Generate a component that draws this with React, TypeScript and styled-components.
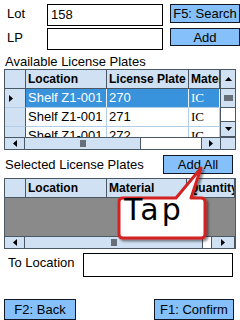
import * as React from 'react';
import styled, { createGlobalStyle } from 'styled-components';

const GlobalStyle = createGlobalStyle`
    html, body {
        margin: 0;
        padding: 0;
        background: #ffffff;
    }
    body {
        font-family: "Liberation Sans", Arial, sans-serif;
        font-size: 13px;
        color: #000000;
    }
`;

const HEADER_BG = '#cfe1f3';
const DARK_LINE = '#4a5866';
const LIGHT_LINE = '#b4cde6';
const SELECTED = '#3992dc';

const Screen = styled.div`
    position: relative;
    width: 240px;
    height: 320px;
    overflow: hidden;
    display: flex;
    flex-direction: column;
`;

const TopForm = styled.div`
    display: grid;
    grid-template-columns: 36px 116px 70px;
    grid-auto-rows: 22px;
    column-gap: 7px;
    row-gap: 2px;
    padding: 4px 0 0 4px;
`;

const FieldLabel = styled.div`
    padding: 1px 0 0 3px;
    line-height: 17px;
`;

const TextBox = styled.div<{ $width?: number; $height?: number }>`
    box-sizing: border-box;
    width: ${p => (p.$width ? `${p.$width}px` : 'auto')};
    height: ${p => p.$height || 22}px;
    border: 1px solid #000000;
    background: #ffffff;
    padding: 2px 3px;
    line-height: 16px;
`;

const Button = styled.div<{ $width: number; $height?: number }>`
    box-sizing: border-box;
    width: ${p => p.$width}px;
    height: ${p => p.$height || 19}px;
    align-self: start;
    border: 1px solid #101828;
    background: #86c0fa;
    display: flex;
    align-items: center;
    justify-content: center;
    line-height: 15px;
`;

const SectionTitle = styled.div`
    margin-top: 4px;
    padding-left: 5px;
    height: 15px;
    line-height: 15px;
`;

const SectionBar = styled.div`
    margin-top: 5px;
    height: 19px;
    display: flex;
    justify-content: space-between;
    align-items: center;
    padding: 0 7px 0 5px;
`;

const GridFrame = styled.div<{ $top: number }>`
    box-sizing: border-box;
    margin: ${p => p.$top}px 0 0 4px;
    width: 232px;
    border: 1px solid ${DARK_LINE};
    display: flex;
    flex-direction: column;
    background: #ffffff;
`;

const GridBody = styled.div<{ $height: number }>`
    display: flex;
    height: ${p => p.$height}px;
    overflow: hidden;
`;

const Table = styled.div<{ $columns: string }>`
    flex: 1;
    display: grid;
    grid-template-columns: ${p => p.$columns};
    grid-auto-rows: 19px;
    align-content: start;
    overflow: hidden;
`;

const HeadCell = styled.div`
    box-sizing: border-box;
    background: ${HEADER_BG};
    border-right: 1px solid ${DARK_LINE};
    border-bottom: 1px solid ${DARK_LINE};
    font-weight: bold;
    font-size: 12px;
    line-height: 18px;
    padding-left: 2px;
    white-space: nowrap;
    overflow: hidden;
`;

const RowHead = styled.div`
    box-sizing: border-box;
    background: ${HEADER_BG};
    border-right: 1px solid ${DARK_LINE};
    border-bottom: 1px solid ${LIGHT_LINE};
    display: flex;
    align-items: center;
    padding-left: 4px;
`;

const Cell = styled.div<{ $selected?: boolean; $serif?: boolean }>`
    box-sizing: border-box;
    background: ${p => (p.$selected ? SELECTED : '#ffffff')};
    color: ${p => (p.$selected ? '#ffffff' : '#000000')};
    border-right: 1px solid ${p => (p.$selected ? '#e8f2fc' : LIGHT_LINE)};
    border-bottom: 1px solid ${LIGHT_LINE};
    font-family: ${p => (p.$serif ? '"Liberation Serif", "Times New Roman", serif' : 'inherit')};
    line-height: 18px;
    padding-left: 2px;
    white-space: nowrap;
    overflow: hidden;
`;

const EmptyArea = styled.div`
    grid-column: 1 / -1;
    height: 38px;
    background: #8a8a8a;
`;

const VScroll = styled.div`
    width: 14px;
    display: flex;
    flex-direction: column;
    border-left: 1px solid ${DARK_LINE};
`;

const ScrollButton = styled.div<{ $size: number; $vertical?: boolean }>`
    box-sizing: border-box;
    flex: 0 0 ${p => p.$size}px;
    background: ${HEADER_BG};
    display: flex;
    align-items: center;
    justify-content: center;
    ${p => (p.$vertical ? `border-bottom: 1px solid ${DARK_LINE};` : `border-right: 1px solid ${DARK_LINE};`)}
`;

const ScrollTrack = styled.div`
    flex: 1;
    background: #ffffff;
`;

const VTrack = styled(ScrollTrack)`
    border-bottom: 1px solid ${DARK_LINE};
`;

const HScroll = styled.div`
    display: flex;
    height: 11px;
    border-top: 1px solid ${DARK_LINE};
`;

const HTrack = styled(ScrollTrack)`
    border-right: 1px solid ${DARK_LINE};
`;

const Corner = styled.div`
    flex: 0 0 14px;
    background: ${HEADER_BG};
`;

const BottomRow = styled.div`
    margin-top: 4px;
    display: flex;
    align-items: flex-start;
    padding: 0 7px 0 8px;
    justify-content: space-between;
`;

const RowLabel = styled.div`
    line-height: 17px;
    padding-top: 1px;
`;

const Footer = styled.div`
    margin-top: auto;
    display: flex;
    justify-content: space-between;
    padding: 0 6px 0 4px;
`;

const Callout = styled.div`
    position: absolute;
    left: 112px;
    top: 162px;
    width: 100px;
    height: 82px;
`;

const CalloutText = styled.div`
    position: absolute;
    left: 12px;
    top: 31px;
    font-family: "DejaVu Sans", "Liberation Sans", sans-serif;
    font-size: 30px;
    letter-spacing: 3px;
    line-height: 34px;
    color: #000000;
`;

const Arrow = ({ dir }: { dir: 'up' | 'down' | 'left' | 'right' }) => {
    const pts = {
        up: '0,4 3.5,0 7,4',
        down: '0,0 7,0 3.5,4',
        left: '4,0 4,7 0,3.5',
        right: '0,0 0,7 4,3.5',
    }[dir];
    const vertical = dir === 'up' || dir === 'down';
    return (
        <svg width={vertical ? 7 : 4} height={vertical ? 4 : 7}>
            <polygon points={pts} fill="#000" />
        </svg>
    );
};

const Grip = ({ vertical }: { vertical?: boolean }) => (
    <svg width={vertical ? 9 : 6} height={vertical ? 6 : 7}>
        {[0, 1, 2].map(i =>
            vertical ? (
                <rect key={i} x={0} y={i * 2 + 0.5} width={9} height={1} fill="#000" />
            ) : (
                <rect key={i} x={i * 2 + 0.5} y={0} width={1} height={7} fill="#000" />
            ),
        )}
    </svg>
);

const HScrollBar = ({ thumb, right, corner }: { thumb: number; right: number; corner?: boolean }) => (
    <HScroll>
        <ScrollButton $size={20}><Arrow dir="left" /></ScrollButton>
        <ScrollButton $size={thumb}><Grip /></ScrollButton>
        <HTrack />
        <ScrollButton $size={right}><Arrow dir="right" /></ScrollButton>
        {corner && <Corner />}
    </HScroll>
);

const plates = [
    { location: 'Shelf Z1-001', plate: '270', material: 'IC' },
    { location: 'Shelf Z1-001', plate: '271', material: 'IC' },
    { location: 'Shelf Z1-001', plate: '272', material: 'IC' },
];

export default function App() {
    return (
        <Screen>
            <GlobalStyle />
            <TopForm>
                <FieldLabel>Lot</FieldLabel>
                <TextBox>158</TextBox>
                <Button $width={70}>F5: Search</Button>
                <FieldLabel>LP</FieldLabel>
                <TextBox />
                <Button $width={70} $height={18}>Add</Button>
            </TopForm>

            <SectionTitle>Available License Plates</SectionTitle>
            <GridFrame $top={0}>
                <GridBody $height={67}>
                    <Table $columns="21px 81px 82px 1fr">
                        <HeadCell />
                        <HeadCell>Location</HeadCell>
                        <HeadCell>License Plate</HeadCell>
                        <HeadCell>Material</HeadCell>
                        {plates.map((row, i) => (
                            <React.Fragment key={row.plate}>
                                <RowHead>{i === 0 && <Arrow dir="right" />}</RowHead>
                                <Cell $selected={i === 0}>{row.location}</Cell>
                                <Cell $selected={i === 0}>{row.plate}</Cell>
                                <Cell $selected={i === 0} $serif>{row.material}</Cell>
                            </React.Fragment>
                        ))}
                    </Table>
                    <VScroll>
                        <ScrollButton $size={19} $vertical><Arrow dir="up" /></ScrollButton>
                        <ScrollButton $size={19} $vertical><Grip vertical /></ScrollButton>
                        <VTrack />
                        <ScrollButton $size={15} $vertical><Arrow dir="down" /></ScrollButton>
                    </VScroll>
                </GridBody>
                <HScrollBar thumb={116} right={19} corner />
            </GridFrame>

            <SectionBar>
                <span>Selected License Plates</span>
                <Button $width={70}>Add All</Button>
            </SectionBar>
            <GridFrame $top={4}>
                <GridBody $height={57}>
                    <Table $columns="21px 81px 80px 1fr">
                        <HeadCell />
                        <HeadCell>Location</HeadCell>
                        <HeadCell>Material</HeadCell>
                        <HeadCell>Quantity</HeadCell>
                        <EmptyArea />
                    </Table>
                </GridBody>
                <HScrollBar thumb={178} right={23} />
            </GridFrame>

            <BottomRow>
                <RowLabel>To Location</RowLabel>
                <TextBox $width={150} $height={24} />
            </BottomRow>

            <Footer>
                <Button $width={72} $height={21}>F2: Back</Button>
                <Button $width={80} $height={21}>F1: Confirm</Button>
            </Footer>

            <Callout>
                <svg width="100" height="82" viewBox="112 162 100 82">
                    <defs>
                        <filter id="shadow" x="-10%" y="-10%" width="130%" height="130%">
                            <feDropShadow dx="2" dy="2" stdDeviation="1" floodColor="#000" floodOpacity="0.45" />
                        </filter>
                    </defs>
                    <path
                        d="M123 198 H176 L201 168 L191 198 H201 Q205 198 205 202 V234 Q205 238 201 238 H123 Q119 238 119 234 V202 Q119 198 123 198 Z"
                        fill="#ffffff"
                        stroke="#d42222"
                        strokeWidth={3}
                        strokeLinejoin="round"
                        filter="url(#shadow)"
                    />
                </svg>
                <CalloutText>Tap</CalloutText>
            </Callout>
        </Screen>
    );
}
